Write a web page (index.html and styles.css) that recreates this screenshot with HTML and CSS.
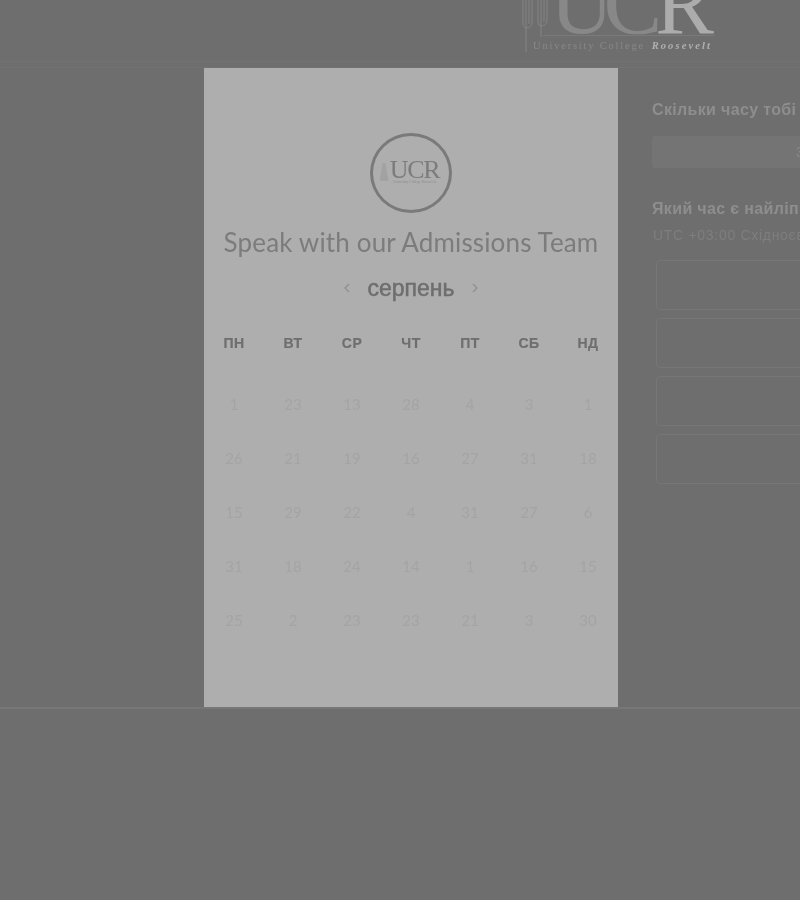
FILE: index.html
```html
<!DOCTYPE html>
<html lang="uk">
<head>
<meta charset="utf-8">
<title>Speak with our Admissions Team</title>
<link rel="stylesheet" href="styles.css">
</head>
<body>
<div class="page">
  <header class="header">
    <div class="brand">
      <svg class="brand-icon" width="26" height="54" viewBox="0 0 26 54" fill="none" stroke="#848484" stroke-width="1">
        <path d="M1 0v23q0 5 3 5M4 0v52M7 0v24M10 0v22q0 6-6 6"/>
        <path d="M16 0v22M19 0v37M22 0v22M25 0v20q0 6-6 6M16 22q0 4 3 4"/>
      </svg>
      <div class="brand-text">
        <div class="brand-ucr"><span class="brand-uc">UC</span><span class="brand-r">R</span></div>
        <div class="brand-name"><span class="brand-uni">University College</span> <span class="brand-roosevelt">Roosevelt</span></div>
      </div>
    </div>
  </header>
  <main class="content">
    <section class="side">
      <h2 class="side-title">Скільки часу тобі потрібно?</h2>
      <div class="duration"><span class="duration-value">30 хв</span></div>
      <h2 class="side-title side-title-time">Який час є найліпшим для тебе?</h2>
      <p class="zone">UTC +03:00 Східноєвропейський літній час</p>
      <div class="slots">
        <div class="slot"></div>
        <div class="slot"></div>
        <div class="slot"></div>
        <div class="slot"></div>
      </div>
    </section>
  </main>
  <footer class="footer"></footer>
</div>
<div class="modal">
  <div class="badge">
    <span class="badge-mark"></span>
    <div class="badge-text">
      <span class="badge-ucr">UCR</span>
      <span class="badge-sub">University College Roosevelt</span>
    </div>
  </div>
  <h1 class="modal-title">Speak with our Admissions Team</h1>
  <div class="month">
    <svg class="chev" width="8" height="12" viewBox="0 0 8 12" fill="none" stroke="#8e8e8e" stroke-width="1.2"><path d="M6 2L2 6l4 4"/></svg>
    <span class="month-name">серпень</span>
    <svg class="chev" width="8" height="12" viewBox="0 0 8 12" fill="none" stroke="#8e8e8e" stroke-width="1.2"><path d="M2 2l4 4-4 4"/></svg>
  </div>
  <div class="weekdays">
    <span>ПН</span><span>ВТ</span><span>СР</span><span>ЧТ</span><span>ПТ</span><span>СБ</span><span>НД</span>
  </div>
  <div class="days">
    <span>1</span><span>23</span><span>13</span><span>28</span><span>4</span><span>3</span><span>1</span>
    <span>26</span><span>21</span><span>19</span><span>16</span><span>27</span><span>31</span><span>18</span>
    <span>15</span><span>29</span><span>22</span><span>4</span><span>31</span><span>27</span><span>6</span>
    <span>31</span><span>18</span><span>24</span><span>14</span><span>1</span><span>16</span><span>15</span>
    <span>25</span><span>2</span><span>23</span><span>23</span><span>21</span><span>3</span><span>30</span>
  </div>
</div>
</body>
</html>
```
FILE: styles.css
```css
html, body {
  margin: 0;
  padding: 0;
  height: 100%;
  overflow: hidden;
  background: #6e6e6e;
}
body {
  position: relative;
  width: 800px;
  height: 900px;
  font-family: "Liberation Sans", Arial, sans-serif;
  filter: blur(0.5px);
}
.page {
  display: flex;
  flex-direction: column;
  height: 900px;
}
.header {
  height: 62px;
  box-sizing: border-box;
  border-bottom: 1px solid #727272;
  display: flex;
  justify-content: flex-end;
  padding-right: 85px;
  overflow: hidden;
  flex: none;
}
.brand {
  display: flex;
  align-items: flex-start;
}
.brand-icon {
  flex: none;
  margin-right: -5px;
}
.brand-text {
  display: flex;
  flex-direction: column;
  width: 172px;
}
.brand-ucr {
  font-family: "Liberation Serif", serif;
  font-size: 88px;
  line-height: 7px;
  height: 35px;
  border-bottom: 1px solid #7a7a7a;
  padding-left: 7px;
  white-space: nowrap;
}
.brand-uc {
  color: #888888;
  letter-spacing: -10px;
}
.brand-r {
  color: #acacac;
  margin-left: 3px;
}
.brand-name {
  font-family: "Liberation Serif", serif;
  font-size: 10.5px;
  line-height: 14px;
  margin-top: 3px;
  margin-left: -10px;
  white-space: nowrap;
}
.brand-uni {
  color: #888888;
  letter-spacing: 1.8px;
}
.brand-roosevelt {
  color: #b0b0b0;
  font-style: italic;
  font-weight: bold;
  letter-spacing: 2.1px;
  margin-left: 4px;
}
.content {
  height: 642px;
  box-sizing: border-box;
  border-top: 1px solid #727272;
  border-bottom: 2px solid #777777;
  margin-top: 5px;
  padding: 32px 0 0 652px;
  flex: none;
  overflow: hidden;
}
.side {
  width: 400px;
}
.side-title {
  margin: 0;
  font-size: 16px;
  line-height: 20px;
  font-weight: bold;
  letter-spacing: 0.35px;
  color: #8e8e8e;
  white-space: nowrap;
}
.duration {
  height: 32px;
  margin-top: 16px;
  background: #747474;
  border-radius: 3px;
  line-height: 32px;
  font-size: 14px;
  color: #8a8a8a;
  padding-left: 144px;
}
.duration-value {
  white-space: nowrap;
}
.side-title-time {
  margin-top: 31px;
}
.zone {
  margin: 7px 0 0 1px;
  font-size: 14px;
  line-height: 18px;
  color: #7e7e7e;
  letter-spacing: 0.7px;
  white-space: nowrap;
}
.slots {
  display: flex;
  flex-direction: column;
  gap: 8px;
  margin: 16px 0 0 4px;
}
.slot {
  height: 50px;
  box-sizing: border-box;
  border: 1px solid #767676;
  border-radius: 4px;
}
.footer {
  flex: 1;
}
.modal {
  position: absolute;
  left: 204px;
  top: 68px;
  width: 414px;
  height: 639px;
  background: #aeaeae;
  display: flex;
  flex-direction: column;
  align-items: center;
  padding-top: 65px;
  box-sizing: border-box;
}
.badge {
  width: 82px;
  height: 80px;
  box-sizing: border-box;
  border: 3px solid #7a7a7a;
  border-radius: 50%;
  display: flex;
  align-items: center;
  justify-content: center;
  gap: 1px;
  flex: none;
  padding-right: 3px;
}
.badge-mark {
  width: 9px;
  height: 18px;
  background: #a2a2a2;
  clip-path: polygon(35% 0, 65% 0, 100% 100%, 0 100%);
  flex: none;
  margin-top: -2px;
}
.badge-text {
  display: flex;
  flex-direction: column;
  align-items: center;
  width: 50px;
  margin-top: -2px;
}
.badge-ucr {
  font-family: "Liberation Serif", serif;
  font-size: 26px;
  line-height: 21px;
  color: #7c7c7c;
  letter-spacing: -1.4px;
}
.badge-sub {
  font-family: "Liberation Serif", serif;
  font-size: 3.6px;
  line-height: 5px;
  color: #8c8c8c;
  white-space: nowrap;
}
.modal-title {
  margin: 14px 0 0;
  font-family: Lato, sans-serif;
  font-size: 26px;
  line-height: 30px;
  font-weight: 400;
  letter-spacing: 0.15px;
  color: #7c7c7c;
  white-space: nowrap;
}
.month {
  display: flex;
  align-items: center;
  gap: 16px;
  margin-top: 16px;
  height: 30px;
}
.month-name {
  font-size: 23px;
  line-height: 30px;
  font-weight: 400;
  color: #6e6e6e;
  -webkit-text-stroke: 0.5px #6e6e6e;
}
.weekdays, .days {
  display: grid;
  grid-template-columns: repeat(7, 59px);
  width: 413px;
  text-align: center;
}
.weekdays {
  margin-top: 30px;
  font-size: 14px;
  line-height: 20px;
  font-weight: bold;
  letter-spacing: 0.5px;
  color: #6f6f6f;
  -webkit-text-stroke: 0.2px #6f6f6f;
}
.days {
  margin-top: 24px;
  grid-auto-rows: 54px;
  font-family: Lato, sans-serif;
  font-size: 15px;
  line-height: 54px;
  color: #a4a4a4;
}
```
